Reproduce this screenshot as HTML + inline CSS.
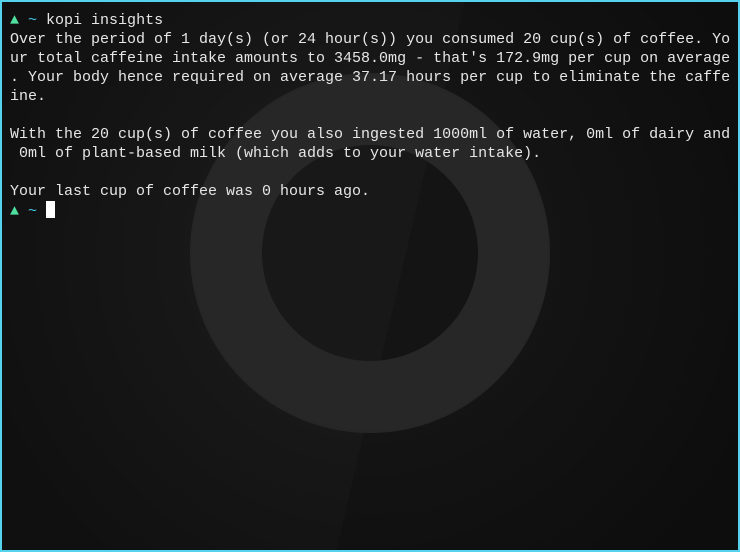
<!DOCTYPE html>
<html><head><style>
html,body{margin:0;padding:0;}
body{width:740px;height:552px;overflow:hidden;background:#141414;position:relative;}
.frame{position:absolute;left:0;top:0;width:736px;height:548px;border:2px solid #55d3ee;overflow:hidden;background:#141414;}
svg{position:absolute;left:-2px;top:-2px;}
pre{position:absolute;left:8px;top:9px;margin:0;font-family:"Liberation Mono",monospace;font-size:15px;line-height:19px;color:#e6e6e6;white-space:pre;}
.g{color:#4fe0a0}.c{color:#44c8e8}
.cur{display:inline-block;width:9px;height:17px;background:#fff;vertical-align:-3px;}
</style></head><body><div class="frame">
<svg width="740" height="552">
<defs><radialGradient id="v" cx="370" cy="253" r="420" gradientUnits="userSpaceOnUse"><stop offset="0.4" stop-color="#000" stop-opacity="0"/><stop offset="1" stop-color="#000" stop-opacity="0.35"/></radialGradient></defs>
<polygon points="0,0 465,0 336,552 0,552" fill="#181818"/>
<circle cx="370" cy="253" r="144" fill="none" stroke="#272727" stroke-width="72"/>
<rect width="740" height="552" fill="url(#v)"/>
</svg>
<pre><span class="g">▲</span> <span class="c">~</span> kopi insights
Over the period of 1 day(s) (or 24 hour(s)) you consumed 20 cup(s) of coffee. Yo
ur total caffeine intake amounts to 3458.0mg - that's 172.9mg per cup on average
. Your body hence required on average 37.17 hours per cup to eliminate the caffe
ine.

With the 20 cup(s) of coffee you also ingested 1000ml of water, 0ml of dairy and
 0ml of plant-based milk (which adds to your water intake).

Your last cup of coffee was 0 hours ago.
<span class="g">▲</span> <span class="c">~</span> <span class="cur"></span></pre>
</div></body></html>
